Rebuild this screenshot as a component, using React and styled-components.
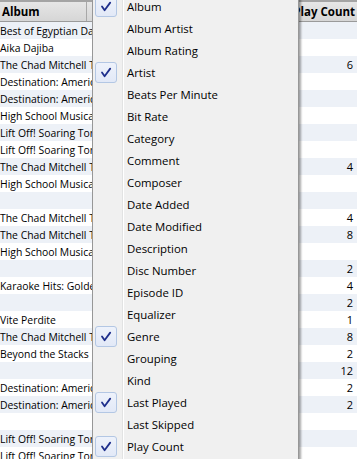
import React from 'react';
import styled, { createGlobalStyle } from 'styled-components';

const GlobalStyle = createGlobalStyle`
  html, body {
    margin: 0;
    padding: 0;
    background: #ffffff;
  }
  body {
    font-family: "Open Sans", "Noto Sans", sans-serif;
    overflow: hidden;
  }
`;

const tracks = [
  { album: 'Best of Egyptian Dance', plays: '' },
  { album: 'Aika Dajiba', plays: '' },
  { album: 'The Chad Mitchell Trio', plays: '6' },
  { album: 'Destination: America', plays: '' },
  { album: 'Destination: America', plays: '' },
  { album: 'High School Musical', plays: '' },
  { album: 'Lift Off! Soaring Tones', plays: '' },
  { album: 'Lift Off! Soaring Tones', plays: '' },
  { album: 'The Chad Mitchell Trio', plays: '4' },
  { album: 'High School Musical', plays: '' },
  { album: '', plays: '' },
  { album: 'The Chad Mitchell Trio', plays: '4' },
  { album: 'The Chad Mitchell Trio', plays: '8' },
  { album: 'High School Musical', plays: '' },
  { album: '', plays: '2' },
  { album: 'Karaoke Hits: Golden Oldies', plays: '4' },
  { album: '', plays: '2' },
  { album: 'Vite Perdite', plays: '1' },
  { album: 'The Chad Mitchell Trio', plays: '8' },
  { album: 'Beyond the Stacks', plays: '2' },
  { album: '', plays: '12' },
  { album: 'Destination: America', plays: '2' },
  { album: 'Destination: America', plays: '2' },
  { album: '', plays: '' },
  { album: 'Lift Off! Soaring Tones', plays: '' },
  { album: 'Lift Off! Soaring Tones', plays: '' },
];

const columns = [
  { label: 'Album', checked: true },
  { label: 'Album Artist' },
  { label: 'Album Rating' },
  { label: 'Artist', checked: true },
  { label: 'Beats Per Minute' },
  { label: 'Bit Rate' },
  { label: 'Category' },
  { label: 'Comment' },
  { label: 'Composer' },
  { label: 'Date Added' },
  { label: 'Date Modified' },
  { label: 'Description' },
  { label: 'Disc Number' },
  { label: 'Episode ID' },
  { label: 'Equalizer' },
  { label: 'Genre', checked: true },
  { label: 'Grouping' },
  { label: 'Kind' },
  { label: 'Last Played', checked: true },
  { label: 'Last Skipped' },
  { label: 'Play Count', checked: true },
];

const CheckMark = () => (
  <svg width='12' height='11' viewBox='0 0 12 11'>
    <path
      d='M2 5.5 L4.6 9.2 L10.2 1.6'
      fill='none'
      stroke='#1f2f8c'
      strokeWidth='1.8'
      strokeLinecap='round'
      strokeLinejoin='round'
    />
  </svg>
);

const App = () => {
  return (
    <>
      <GlobalStyle />
      <Page>
        <HeaderRow>
          <AlbumHead>Album</AlbumHead>
          <HeadFiller />
          <CountHead>Play Count</CountHead>
        </HeaderRow>
        {tracks.map((track, index) => (
          <TrackRow key={index} $striped={index % 2 === 0}>
            <AlbumCell>{track.album}</AlbumCell>
            <CountCell>{track.plays}</CountCell>
          </TrackRow>
        ))}

        <ColumnMenu>
          {columns.map((col) => (
            <MenuItem key={col.label}>
              <Gutter>{col.checked && <CheckBox><CheckMark /></CheckBox>}</Gutter>
              <ItemLabel>{col.label}</ItemLabel>
            </MenuItem>
          ))}
        </ColumnMenu>
      </Page>
    </>
  );
};

export default App;

const Page = styled.div`
  position: relative;
  width: 357px;
  height: 459px;
  overflow: hidden;
  background: #ffffff;
`;

const HeaderRow = styled.div`
  display: flex;
  align-items: stretch;
  height: 19px;
  border-top: 2px solid #a4a4a4;
  border-bottom: 1px solid #9a9a9a;
  background: linear-gradient(to bottom, #e6e6e6 0%, #d6d6d6 100%);
  font-size: 11.5px;
  font-weight: 700;
  color: #000000;
`;

const AlbumHead = styled.div`
  width: 84px;
  padding-left: 2px;
  display: flex;
  align-items: center;
  border-right: 1px solid #a8a8a8;
`;

const HeadFiller = styled.div`
  flex: 1;
`;

const CountHead = styled.div`
  width: 62px;
  padding-right: 2px;
  display: flex;
  align-items: center;
  justify-content: flex-end;
  white-space: nowrap;
`;

const TrackRow = styled.div`
  display: flex;
  align-items: center;
  height: 17px;
  background: ${({ $striped }) => ($striped ? '#edf1f7' : '#ffffff')};
  font-size: 10.4px;
  color: #000000;
`;

const AlbumCell = styled.div`
  width: 130px;
  white-space: nowrap;
  overflow: hidden;
`;

const CountCell = styled.div`
  margin-left: auto;
  padding-right: 4px;
  text-align: right;
  font-size: 11px;
`;

const ColumnMenu = styled.div`
  position: absolute;
  top: -6px;
  left: 92px;
  width: 205px;
  background: #f0f0f0;
  border: 1px solid #979797;
  box-shadow: 2px 2px 2px rgba(0, 0, 0, 0.35);
  padding: 0 0 2px 0;
  background-image: linear-gradient(
    to right,
    transparent 29px,
    #e2e3e3 29px,
    #e2e3e3 30px,
    #ffffff 30px,
    #ffffff 31px,
    transparent 31px
  );
`;

const MenuItem = styled.div`
  display: flex;
  align-items: center;
  height: 22px;
  font-size: 11.4px;
  color: #000000;
`;

const Gutter = styled.div`
  width: 34px;
  height: 22px;
  display: flex;
  align-items: center;
  padding-left: 2px;
  box-sizing: border-box;
`;

const CheckBox = styled.div`
  width: 20px;
  height: 19px;
  display: flex;
  align-items: center;
  justify-content: center;
  border: 1px solid #b3c7e4;
  border-radius: 3px;
  background: linear-gradient(to bottom, #eef2fb 0%, #e2e9f7 100%);
`;

const ItemLabel = styled.span`
  white-space: nowrap;
`;
